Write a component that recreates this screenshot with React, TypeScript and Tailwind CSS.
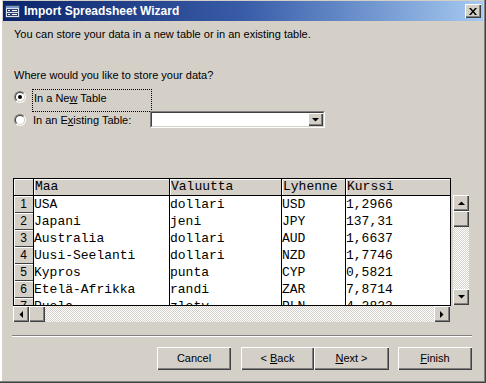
import React from 'react';

const raised =
  'shadow-[inset_1px_1px_0_#ffffff,inset_-1px_-1px_0_#404040,inset_-2px_-2px_0_#808080]';
const checker =
  'bg-[image:repeating-conic-gradient(#d4d0c8_0%_25%,#ffffff_0%_50%)] bg-[length:2px_2px]';
const sans = "font-['Liberation_Sans',Arial,sans-serif]";
const mono = "font-['Liberation_Mono','Courier_New',monospace]";

const rows = [
  ['USA', 'dollari', 'USD', '1,2966'],
  ['Japani', 'jeni', 'JPY', '137,31'],
  ['Australia', 'dollari', 'AUD', '1,6637'],
  ['Uusi-Seelanti', 'dollari', 'NZD', '1,7746'],
  ['Kypros', 'punta', 'CYP', '0,5821'],
  ['Etelä-Afrikka', 'randi', 'ZAR', '7,8714'],
  ['Puola', 'zloty', 'PLN', '4,2823'],
];

const widths = ['w-[136px]', 'w-[112px]', 'w-[64px]', 'w-[105px]'];
const headers = ['Maa', 'Valuutta', 'Lyhenne', 'Kurssi'];

function Arrow({ dir }: { dir: 'up' | 'down' | 'left' | 'right' }) {
  const pts = {
    up: '0,4 7,4 3.5,0.5',
    down: '0,0 7,0 3.5,3.5',
    left: '4,0 4,7 0.5,3.5',
    right: '0,0 0,7 3.5,3.5',
  }[dir];
  const vertical = dir === 'up' || dir === 'down';
  return (
    <svg width={vertical ? 7 : 4} height={vertical ? 4 : 7} viewBox={vertical ? '0 0 7 4' : '0 0 4 7'}>
      <polygon points={pts} fill="#000" />
    </svg>
  );
}

function ScrollBtn({ dir }: { dir: 'up' | 'down' | 'left' | 'right' }) {
  return (
    <div className={`w-[16px] h-[16px] shrink-0 bg-[#d4d0c8] flex items-center justify-center ${raised}`}>
      <Arrow dir={dir} />
    </div>
  );
}

function Radio({ checked }: { checked?: boolean }) {
  return (
    <div className="w-[12px] h-[12px] shrink-0 rounded-full border border-t-[#808080] border-l-[#808080] border-b-white border-r-white">
      <div className="w-full h-full rounded-full border border-t-[#404040] border-l-[#404040] border-b-[#d4d0c8] border-r-[#d4d0c8] bg-white flex items-center justify-center">
        {checked && <div className="w-[4px] h-[4px] rounded-full bg-black" />}
      </div>
    </div>
  );
}

function Button({ children, w }: { children: React.ReactNode; w: string }) {
  return (
    <button className={`${w} h-[23px] bg-[#d4d0c8] text-[11px] text-black ${raised}`}>{children}</button>
  );
}

export default function App() {
  return (
    <div
      className={`w-[486px] h-[383px] bg-[#d4d0c8] flex flex-col px-[3px] pt-[1px] text-black ${sans} text-[11px] shadow-[inset_-1px_-1px_0_#404040,inset_-2px_-2px_0_#808080,inset_2px_0_0_#ffffff]`}
    >
      {/* title bar */}
      <div className="h-[20px] shrink-0 flex items-center bg-linear-to-r from-[#0a246a] via-[#3a5ca8] to-[#a6caf0] pl-[2px] pr-[2px]">
        <svg width="15" height="13" viewBox="0 0 15 13">
          <rect x="0.5" y="0.5" width="14" height="12" fill="#d6e2f2" stroke="#30406a" />
          <rect x="1" y="1" width="13" height="2" fill="#7c98c8" />
          <rect x="2.5" y="4.5" width="3" height="2" fill="#fff" stroke="#30406a" />
          <rect x="6.5" y="4.5" width="6" height="2" fill="#fff" stroke="#30406a" />
          <rect x="2.5" y="8.5" width="3" height="2" fill="#fff" stroke="#30406a" />
          <rect x="6.5" y="8.5" width="6" height="2" fill="#fff" stroke="#30406a" />
        </svg>
        <span className="ml-[4px] text-white font-bold text-[12px] leading-none">Import Spreadsheet Wizard</span>
        <div className={`ml-auto w-[16px] h-[14px] bg-[#d4d0c8] flex items-center justify-center ${raised}`}>
          <svg width="8" height="7" viewBox="0 0 8 7">
            <path d="M0 0h2l2 2.5L6 0h2L5 3.5 8 7H6L4 4.5 2 7H0l3-3.5z" fill="#000" />
          </svg>
        </div>
      </div>

      <p className="mt-[7px] pl-[11px] leading-[13px]">You can store your data in a new table or in an existing table.</p>
      <p className="mt-[28px] pl-[11px] leading-[13px]">Where would you like to store your data?</p>

      <div className="mt-[7px] pl-[11px] flex items-start h-[23px]">
        <div className="mt-[2px]">
          <Radio checked />
        </div>
        <div className="ml-[6px] w-[120px] h-[23px] border border-dotted border-black pl-[1px] pt-[1px] leading-[14px]">
          In a Ne<u>w</u> Table
        </div>
      </div>

      <div className="-mt-[1px] pl-[11px] flex items-center h-[17px] relative">
        <Radio />
        <div className="ml-[6px] w-[118px] pl-[1px] leading-[14px]">
          In an E<u>x</u>isting Table:
        </div>
        <div className="w-[175px] h-[17px] bg-white border border-t-[#808080] border-l-[#808080] border-b-white border-r-white flex justify-end">
          <div className="w-full h-full border border-t-[#404040] border-l-[#404040] border-b-[#d4d0c8] border-r-[#d4d0c8] flex justify-end">
            <div className={`w-[15px] h-full bg-[#d4d0c8] flex items-center justify-center ${raised}`}>
              <Arrow dir="down" />
            </div>
          </div>
        </div>
      </div>

      {/* datasheet */}
      <div className="mt-[50px] pl-[10px] flex items-start">
        <div className="flex flex-col">
          <div className={`w-[438px] border-l border-t border-b border-black ${mono} text-[13px]`}>
            <div className="flex h-[17px] border-b border-black bg-[#d4d0c8]">
              <div className="w-[20px] border-r border-black shadow-[inset_1px_1px_0_#ffffff]" />
              {headers.map((h, i) => (
                <div
                  key={h}
                  className={`${widths[i]} border-r border-black pl-[1px] leading-[16px] shadow-[inset_1px_1px_0_#ffffff]`}
                >
                  {h}
                </div>
              ))}
            </div>
            <div className="h-[109px] overflow-hidden">
              {rows.map((r, ri) => (
                <div key={ri} className="flex h-[17px] shrink-0">
                  <div
                    className={`w-[20px] border-r border-black bg-[#d4d0c8] text-center ${sans} text-[12px] leading-[17px] shadow-[inset_1px_1px_0_#ffffff,inset_0_-1px_0_#404040]`}
                  >
                    {ri + 1}
                  </div>
                  {r.map((c, ci) => (
                    <div key={ci} className={`${widths[ci]} border-r border-black bg-white leading-[17px] whitespace-pre`}>
                      {c}
                    </div>
                  ))}
                </div>
              ))}
            </div>
          </div>
          <div className="flex w-[437px] h-[16px]">
            <ScrollBtn dir="left" />
            <div className={`w-[16px] h-[16px] bg-[#d4d0c8] ${raised}`} />
            <div className={`flex-1 ${checker}`} />
            <ScrollBtn dir="right" />
          </div>
        </div>

        <div className="ml-[2px] mt-[17px] w-[16px] h-[110px] flex flex-col">
          <ScrollBtn dir="up" />
          <div className={`w-[16px] h-[16px] bg-[#d4d0c8] ${raised}`} />
          <div className={`flex-1 ${checker}`} />
          <ScrollBtn dir="down" />
        </div>
      </div>

      <div className="mt-[13px] ml-[9px] w-[460px] h-[2px] border-t border-[#808080] border-b border-b-white" />

      <div className="mt-[10px] ml-[154px] flex">
        <Button w="w-[74px]">Cancel</Button>
        <div className="ml-[10px] flex">
          <Button w="w-[73px]">
            &lt; <u>B</u>ack
          </Button>
          <Button w="w-[75px]">
            <u>N</u>ext &gt;
          </Button>
        </div>
        <div className="ml-[9px]">
          <Button w="w-[74px]">
            <u>F</u>inish
          </Button>
        </div>
      </div>
    </div>
  );
}
